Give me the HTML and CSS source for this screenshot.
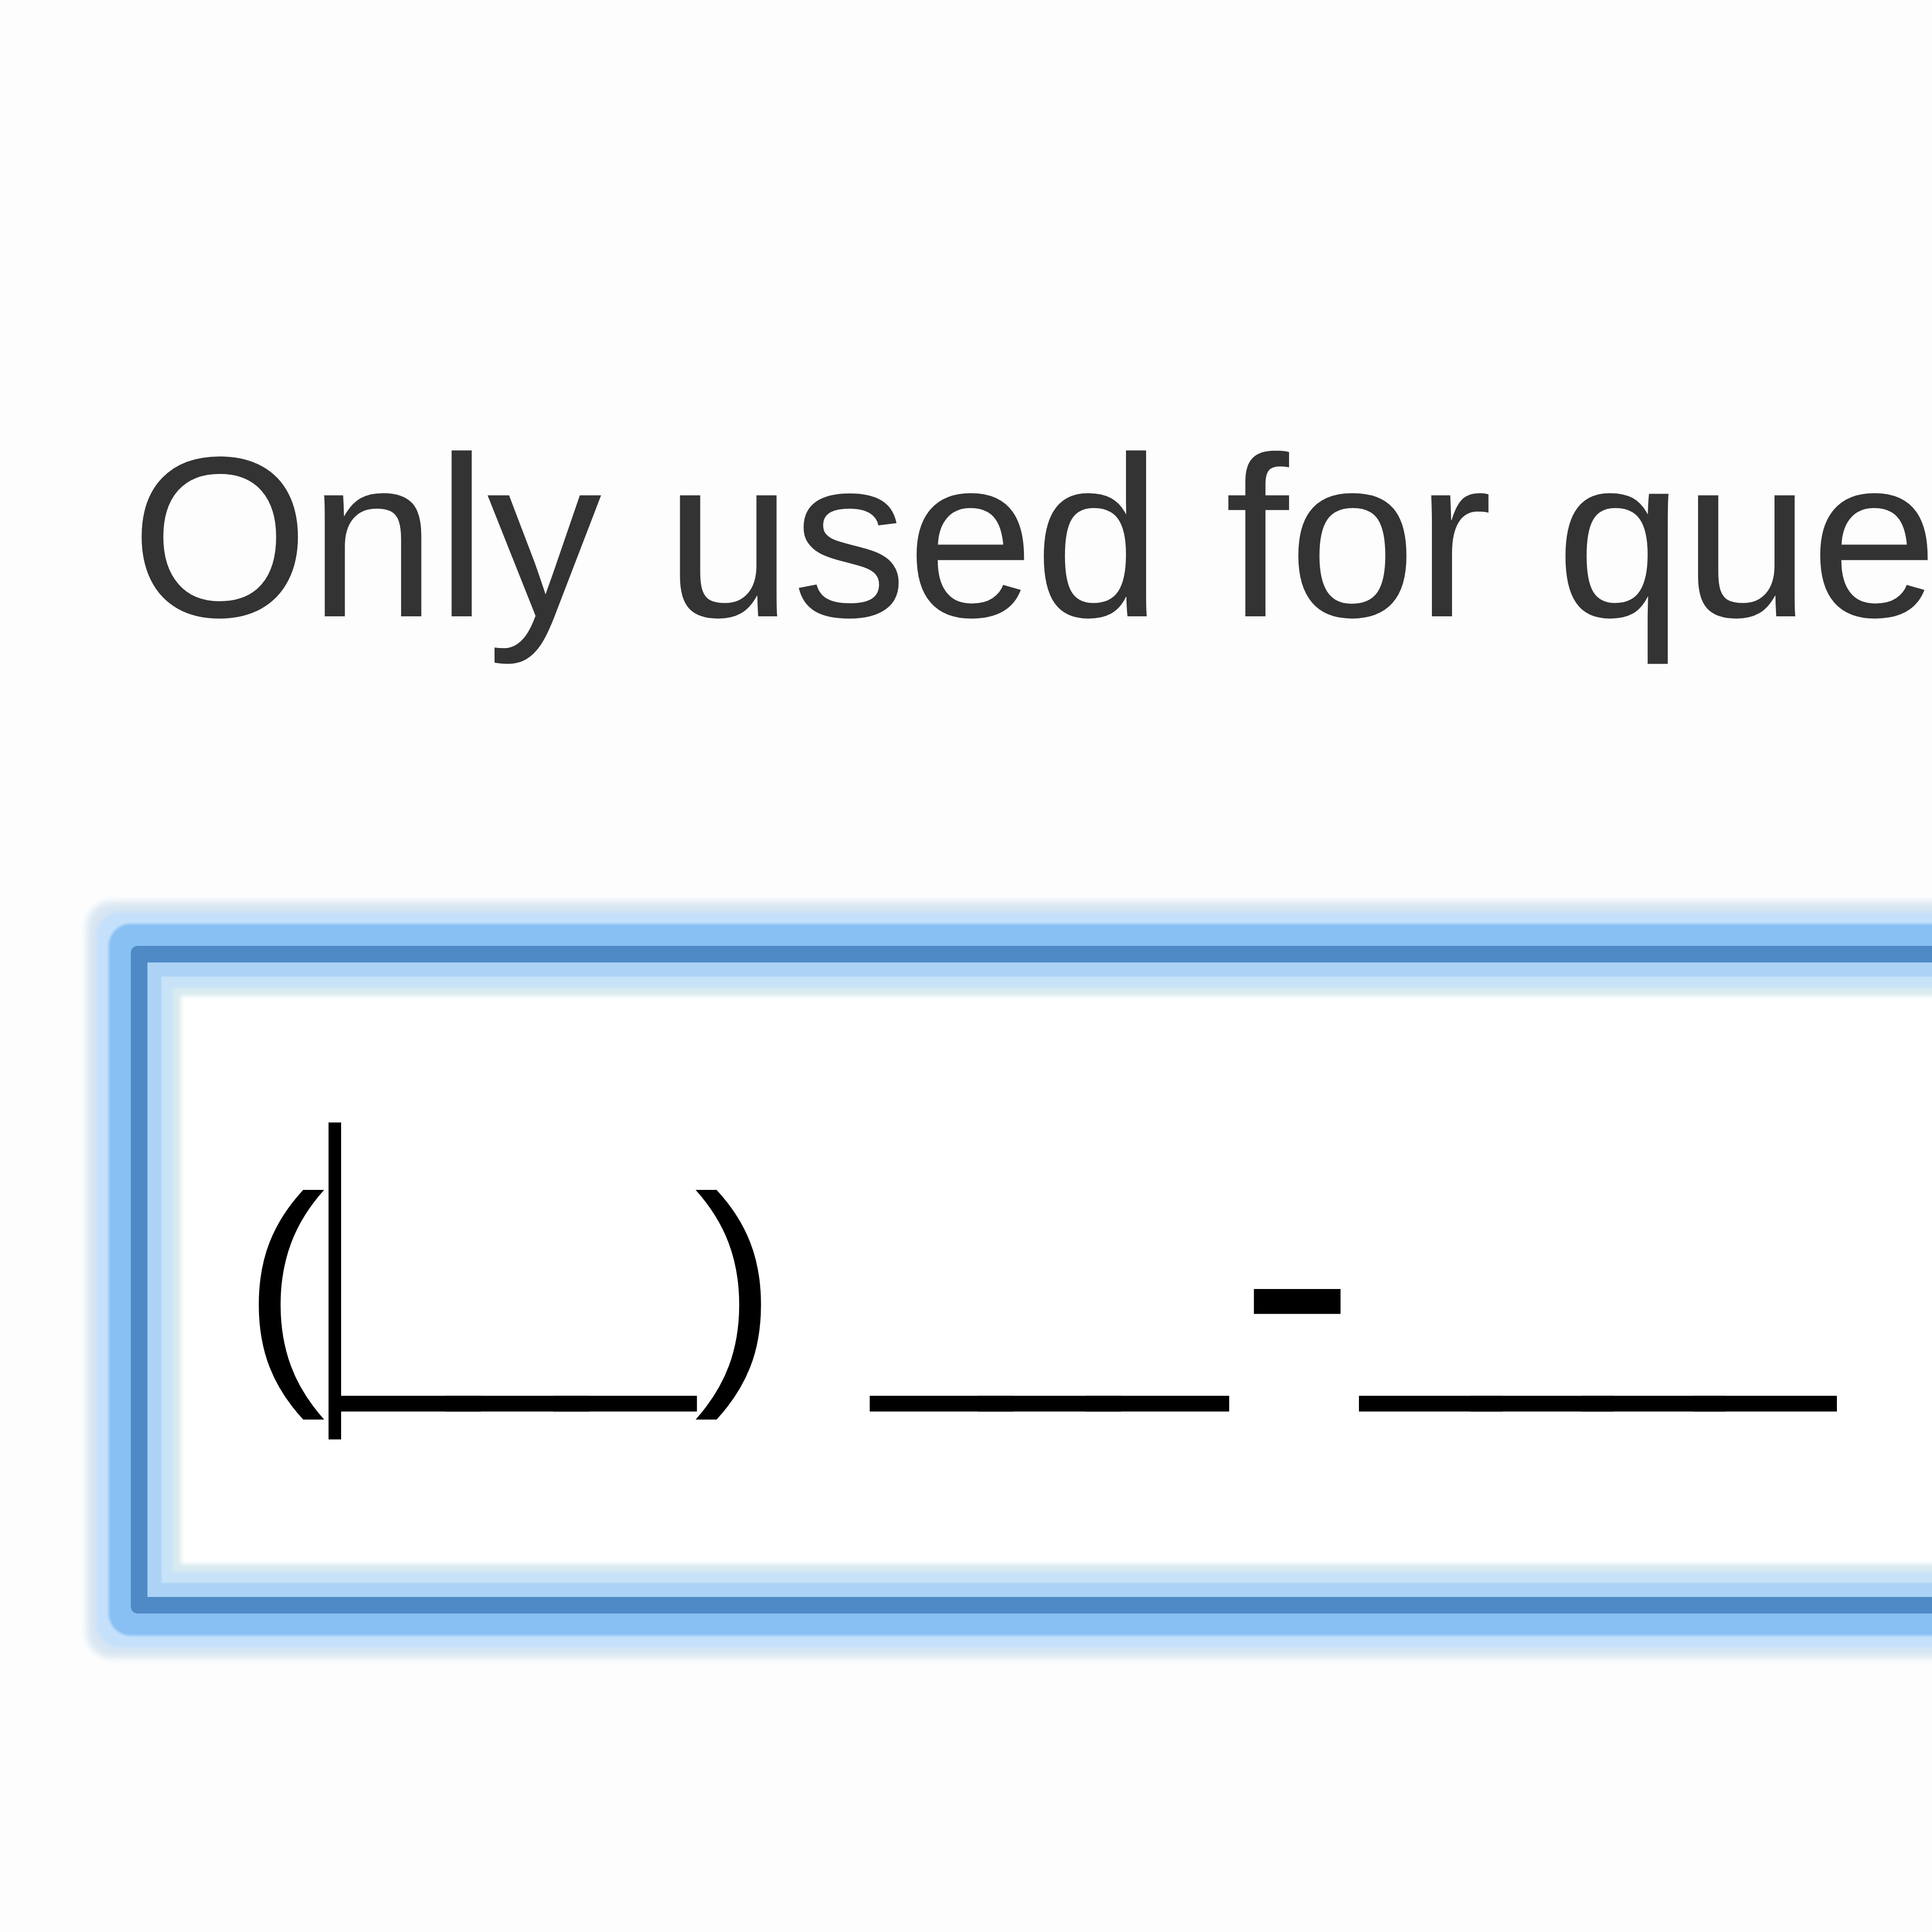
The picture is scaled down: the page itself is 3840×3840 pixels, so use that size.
FILE: index.html
```html
<!DOCTYPE html>
<html lang="en">
<head>
<meta charset="utf-8">
<title>Phone field</title>
<link rel="stylesheet" href="styles.css">
</head>
<body>
<div class="page">
  <p class="help">Only used for questions about your order.</p>
  <div class="phone-input"><span class="paren">(</span><span class="caret"></span><span class="blank">___</span><span class="paren close">)</span> <span class="blank">___</span><span class="dash">-</span><span class="blank last">____</span></div>
</div>
</body>
</html>
```

FILE: styles.css
```css
html {
  overflow: hidden;
  background: #fdfdfd;
}

body {
  margin: 0;
  padding: 0;
  background: #fdfdfd;
}

.page {
  padding: 840px 0 400px 260px;
}

.help {
  margin: 0;
  font-family: "Liberation Sans", Arial, sans-serif;
  font-size: 455px;
  line-height: 1;
  color: #333;
  white-space: nowrap;
}

.phone-input {
  margin-top: 585px;
  width: 4200px;
  height: 1327px;
  box-sizing: border-box;
  border: 33px solid #4f8ac6;
  border-radius: 14px;
  background: #ffffff;
  padding: 14px 0 0 191px;
  font-family: "Liberation Sans", Arial, sans-serif;
  font-size: 490px;
  line-height: 1247px;
  color: #000;
  white-space: nowrap;
  box-shadow:
    inset 0 0 3px 28px #acd3f5,
    inset 0 0 5px 50px #c8e3f8,
    inset 0 0 8px 66px #d8eaf0,
    0 0 4px 44px #89c0f3,
    0 0 8px 68px #c4e0fb,
    0 0 14px 88px #d8e6f2;
}

.caret {
  display: inline-block;
  width: 25px;
  height: 630px;
  margin-left: 6px;
  background: #000;
  vertical-align: -141px;
}

.blank {
  letter-spacing: -58px;
  line-height: 1;
  vertical-align: 12px;
}

.blank.last {
  letter-spacing: -51px;
}

.paren.close {
  margin-left: 58px;
  margin-right: 57px;
}

.dash {
  font-family: "Liberation Serif", "Times New Roman", serif;
  font-size: 663px;
  line-height: 1;
  margin-left: 88px;
  margin-right: 20px;
  vertical-align: -23px;
}
```
